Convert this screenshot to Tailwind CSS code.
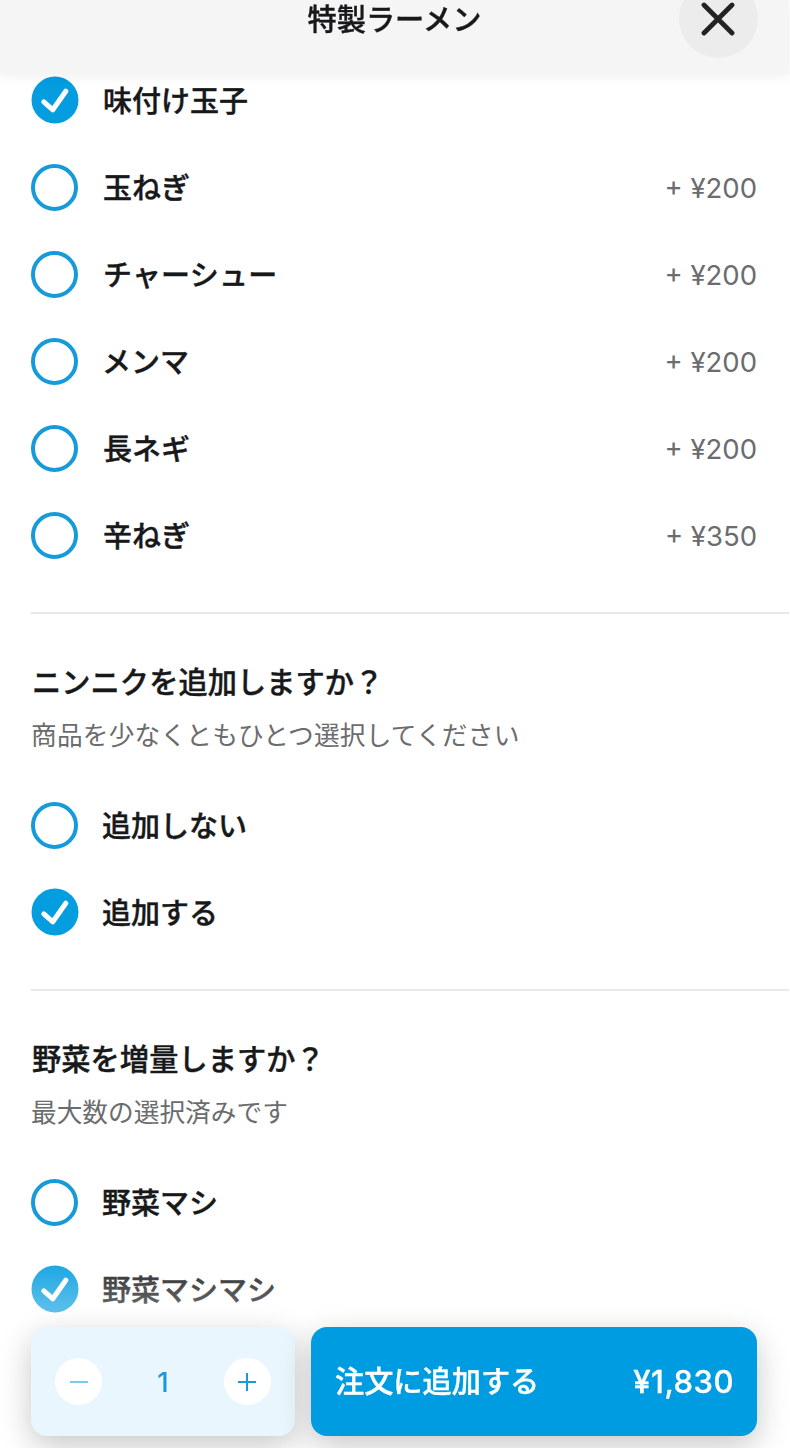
<!DOCTYPE html>
<html lang="ja">
<head>
  <meta charset="UTF-8" />
  <meta name="viewport" content="width=device-width, initial-scale=1.0" />
  <title>特製ラーメン</title>
  <script src="https://cdn.jsdelivr.net/npm/@tailwindcss/browser@4"></script>
</head>
<body class="h-[1448px] overflow-hidden bg-white font-['Inter','Noto_Sans_CJK_JP',sans-serif] text-[#17181a]">
  <!-- Header -->
  <header class="fixed top-0 left-0 z-20 h-[74px] w-[789px] bg-[#f5f5f5] shadow-[0_3px_12px_rgba(0,0,0,0.06)]">
    <h1 class="pt-px text-center text-[29.2px] leading-[38px] font-medium [-webkit-text-stroke:0.4px]">特製ラーメン</h1>
    <button class="absolute -top-[21px] right-[31px] flex size-[79px] items-center justify-center rounded-full bg-[#ececec] pr-px" aria-label="閉じる">
      <svg class="size-[34px]" viewBox="0 0 34 34" fill="none" stroke="#232323" stroke-width="4.8" stroke-linecap="round"><path d="M3 3l28 28M31 3L3 31" /></svg>
    </button>
  </header>

  <main class="pt-[57px] pl-[31px]">
    <ul class="pr-[33px]">
      <li class="flex h-[87px] items-center gap-6">
        <svg class="mb-px size-[48px] shrink-0" viewBox="0 0 48 48"><circle cx="24" cy="24" r="23.5" fill="#049de0" /><path d="M12.8 25.8l9 8L34.8 15.2" fill="none" stroke="#fff" stroke-width="5" stroke-linecap="round" stroke-linejoin="round" /></svg>
        <span class="pt-[2px] text-[29px] font-medium [-webkit-text-stroke:0.4px]">味付け玉子</span>
      </li>
      <li class="flex h-[87px] items-center gap-6">
        <span class="size-[47px] shrink-0 rounded-full border-4 border-[#179ad9]"></span>
        <span class="pt-[2px] pl-px text-[29px] font-medium [-webkit-text-stroke:0.4px]">玉ねぎ</span>
        <span class="ml-auto pt-[3px] text-[27.5px] text-[#6b6c6e]">+ ¥200</span>
      </li>
      <li class="flex h-[87px] items-center gap-6">
        <span class="size-[47px] shrink-0 rounded-full border-4 border-[#179ad9]"></span>
        <span class="pt-[2px] pl-px text-[29px] font-medium tracking-[0.2px] [-webkit-text-stroke:0.4px]">チャーシュー</span>
        <span class="ml-auto pt-[3px] text-[27.5px] text-[#6b6c6e]">+ ¥200</span>
      </li>
      <li class="flex h-[87px] items-center gap-6">
        <span class="size-[47px] shrink-0 rounded-full border-4 border-[#179ad9]"></span>
        <span class="pt-[2px] text-[29px] font-medium [-webkit-text-stroke:0.4px]">メンマ</span>
        <span class="ml-auto pt-[3px] text-[27.5px] text-[#6b6c6e]">+ ¥200</span>
      </li>
      <li class="flex h-[87px] items-center gap-6">
        <span class="size-[47px] shrink-0 rounded-full border-4 border-[#179ad9]"></span>
        <span class="pt-[2px] pl-px text-[29px] font-medium [-webkit-text-stroke:0.4px]">長ネギ</span>
        <span class="ml-auto pt-[3px] text-[27.5px] text-[#6b6c6e]">+ ¥200</span>
      </li>
      <li class="flex h-[87px] items-center gap-6">
        <span class="size-[47px] shrink-0 rounded-full border-4 border-[#179ad9]"></span>
        <span class="pt-[2px] pl-px text-[29px] font-medium [-webkit-text-stroke:0.4px]">辛ねぎ</span>
        <span class="ml-auto pt-[3px] text-[27.5px] text-[#6b6c6e]">+ ¥350</span>
      </li>
    </ul>

    <section class="mt-[33px] mr-px border-t-2 border-[#e8e8e8] pt-[49px]">
      <h2 class="pl-px text-[29.2px] leading-[40px] font-medium tracking-[0.1px] [-webkit-text-stroke:0.4px]">ニンニクを追加しますか？</h2>
      <p class="mt-[14px] text-[25.7px] leading-[38px] tracking-[0.2px] text-[#6b6c6e]">商品を少なくともひとつ選択してください</p>
      <ul class="mt-[27px]">
        <li class="flex h-[87px] items-center gap-6">
          <span class="size-[47px] shrink-0 rounded-full border-4 border-[#179ad9]"></span>
          <span class="pt-[2px] text-[29px] font-medium [-webkit-text-stroke:0.4px]">追加しない</span>
        </li>
        <li class="flex h-[87px] items-center gap-6">
          <svg class="mb-px size-[48px] shrink-0" viewBox="0 0 48 48"><circle cx="24" cy="24" r="23.5" fill="#049de0" /><path d="M12.8 25.8l9 8L34.8 15.2" fill="none" stroke="#fff" stroke-width="5" stroke-linecap="round" stroke-linejoin="round" /></svg>
          <span class="-ml-px pt-[2px] text-[29px] font-medium [-webkit-text-stroke:0.4px]">追加する</span>
        </li>
      </ul>
    </section>

    <section class="mt-[33px] mr-px border-t-2 border-[#e8e8e8] pt-[49px]">
      <h2 class="pl-px text-[29.2px] leading-[40px] font-medium tracking-[0.1px] [-webkit-text-stroke:0.4px]">野菜を増量しますか？</h2>
      <p class="mt-[14px] text-[25.7px] leading-[38px] text-[#6b6c6e]">最大数の選択済みです</p>
      <ul class="mt-[27px]">
        <li class="flex h-[87px] items-center gap-6">
          <span class="size-[47px] shrink-0 rounded-full border-4 border-[#179ad9]"></span>
          <span class="pt-[2px] text-[29px] font-medium [-webkit-text-stroke:0.4px]">野菜マシ</span>
        </li>
        <li class="flex h-[87px] items-center gap-6">
          <svg class="mb-px size-[48px] shrink-0" viewBox="0 0 48 48"><circle cx="24" cy="24" r="23.5" fill="#049de0" /><path d="M12.8 25.8l9 8L34.8 15.2" fill="none" stroke="#fff" stroke-width="5" stroke-linecap="round" stroke-linejoin="round" /></svg>
          <span class="-ml-px pt-[2px] text-[29px] font-medium [-webkit-text-stroke:0.4px]">野菜マシマシ</span>
        </li>
      </ul>
    </section>
  </main>

  <!-- Order bar, content fades out beneath it -->
  <footer class="fixed bottom-0 left-0 z-10 flex h-[202px] w-full gap-4 bg-linear-to-b from-white/0 to-white to-90% pt-[81px] pr-[33px] pb-[12px] pl-[31px]">
    <div class="flex w-[264px] items-center justify-between rounded-2xl bg-[#eaf6fd] px-6 shadow-[0_10px_32px_rgba(0,0,0,0.22)]">
      <button class="flex size-[47px] items-center justify-center rounded-full bg-white" aria-label="減らす">
        <svg class="size-5" viewBox="0 0 20 20" stroke="#7ccaee" stroke-width="2"><path d="M1 10h18" /></svg>
      </button>
      <span class="pt-[3px] text-[27.5px] font-medium text-[#179ad9]">1</span>
      <button class="flex size-[47px] items-center justify-center rounded-full bg-white" aria-label="増やす">
        <svg class="size-5" viewBox="0 0 20 20" stroke="#179ad9" stroke-width="2"><path d="M1 10h18M10 1v18" /></svg>
      </button>
    </div>
    <button class="flex flex-1 items-center justify-between rounded-2xl bg-[#009ce1] pr-[23px] pl-6 text-[29.2px] font-medium text-white shadow-[0_10px_32px_rgba(0,0,0,0.22)]">
      <span class="[-webkit-text-stroke:0.4px]">注文に追加する</span>
      <span class="pt-px text-[31px] tracking-[0.5px] [-webkit-text-stroke:0.3px]">¥1,830</span>
    </button>
  </footer>
</body>
</html>
